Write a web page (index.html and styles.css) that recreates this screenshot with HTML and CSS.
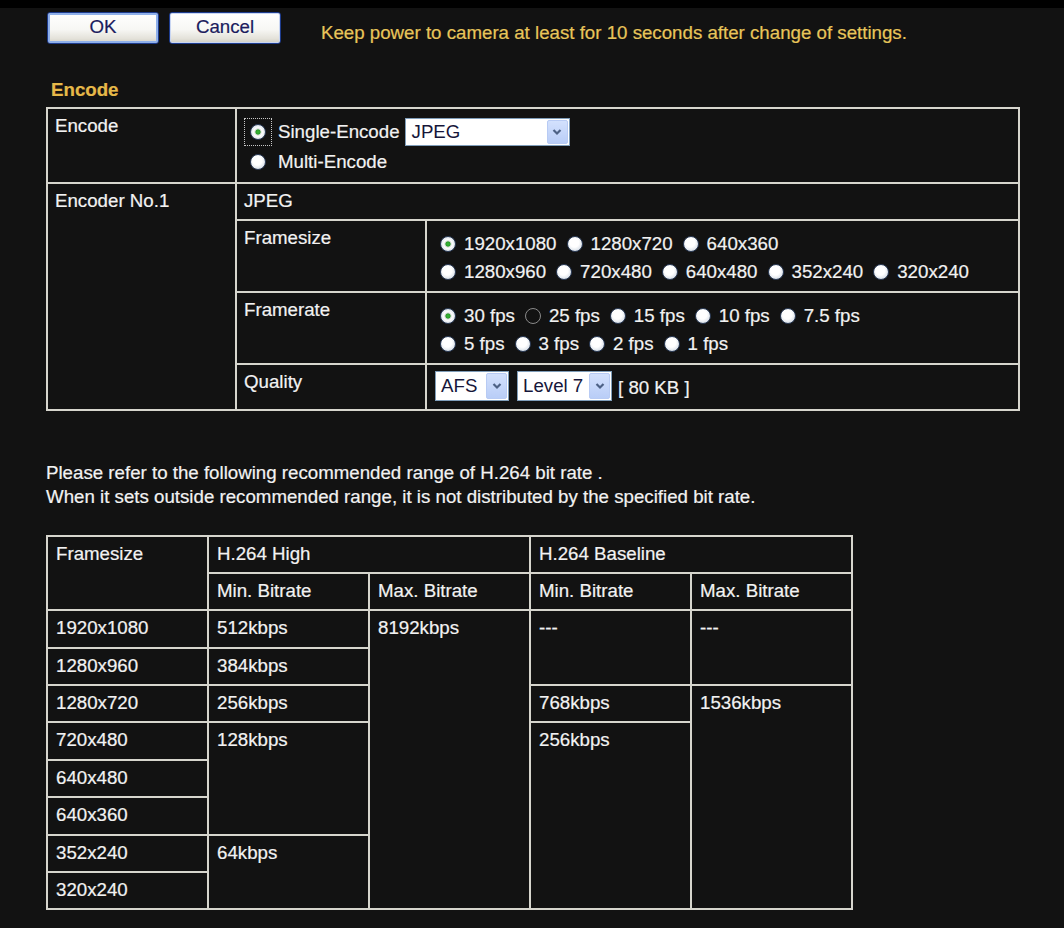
FILE: index.html
```html
<!DOCTYPE html>
<html lang="en">
<head>
<meta charset="utf-8">
<title>Encode settings</title>
<link rel="stylesheet" href="styles.css">
</head>
<body>
<div class="topbar"></div>
<div class="page">
  <div class="actions">
    <button class="btn btn-default">OK</button>
    <button class="btn">Cancel</button>
    <span class="notice">Keep power to camera at least for 10 seconds after change of settings.</span>
  </div>

  <h2 class="section-title">Encode</h2>

  <table class="grid settings">
    <colgroup><col class="c1"><col class="c2"><col class="c3"></colgroup>
    <tr class="r-encode">
      <td>Encode</td>
      <td colspan="2" class="encode-cell">
        <div class="enc-line">
          <span class="slot focus"><span class="radio checked"></span></span>
          <span class="enc-text">Single-Encode</span>
          <span class="select sel-jpeg"><span class="select-value">JPEG</span><span class="select-btn"><svg viewBox="0 0 12 12" width="12" height="12"><path d="M2.5 4 L6 7.5 L9.5 4" fill="none" stroke="#4d6185" stroke-width="2.2"/></svg></span></span>
        </div>
        <div class="enc-line">
          <span class="slot"><span class="radio"></span></span>
          <span class="enc-text">Multi-Encode</span>
        </div>
      </td>
    </tr>
    <tr class="r-jpeg">
      <td rowspan="4">Encoder No.1</td>
      <td colspan="2">JPEG</td>
    </tr>
    <tr class="r-opts">
      <td>Framesize</td>
      <td class="opt-cell">
        <div class="opt-line">
          <span class="opt"><span class="radio checked"></span>1920x1080</span>
          <span class="opt"><span class="radio"></span>1280x720</span>
          <span class="opt"><span class="radio"></span>640x360</span>
        </div>
        <div class="opt-line">
          <span class="opt"><span class="radio"></span>1280x960</span>
          <span class="opt"><span class="radio"></span>720x480</span>
          <span class="opt"><span class="radio"></span>640x480</span>
          <span class="opt"><span class="radio"></span>352x240</span>
          <span class="opt"><span class="radio"></span>320x240</span>
        </div>
      </td>
    </tr>
    <tr class="r-opts">
      <td>Framerate</td>
      <td class="opt-cell">
        <div class="opt-line">
          <span class="opt"><span class="radio checked"></span>30 fps</span>
          <span class="opt"><span class="radio empty"></span>25 fps</span>
          <span class="opt"><span class="radio"></span>15 fps</span>
          <span class="opt"><span class="radio"></span>10 fps</span>
          <span class="opt"><span class="radio"></span>7.5 fps</span>
        </div>
        <div class="opt-line">
          <span class="opt"><span class="radio"></span>5 fps</span>
          <span class="opt"><span class="radio"></span>3 fps</span>
          <span class="opt"><span class="radio"></span>2 fps</span>
          <span class="opt"><span class="radio"></span>1 fps</span>
        </div>
      </td>
    </tr>
    <tr class="r-quality">
      <td>Quality</td>
      <td class="quality-cell">
        <div class="q-line">
          <span class="select sel-afs"><span class="select-value">AFS</span><span class="select-btn"><svg viewBox="0 0 12 12" width="12" height="12"><path d="M2.5 4 L6 7.5 L9.5 4" fill="none" stroke="#4d6185" stroke-width="2.2"/></svg></span></span>
          <span class="select sel-level"><span class="select-value">Level 7</span><span class="select-btn"><svg viewBox="0 0 12 12" width="12" height="12"><path d="M2.5 4 L6 7.5 L9.5 4" fill="none" stroke="#4d6185" stroke-width="2.2"/></svg></span></span>
          <span class="q-size">[ 80 KB ]</span>
        </div>
      </td>
    </tr>
  </table>

  <p class="note">Please refer to the following recommended range of H.264 bit rate .<br>When it sets outside recommended range, it is not distributed by the specified bit rate.</p>

  <table class="grid bitrate">
    <colgroup><col><col><col><col><col></colgroup>
    <tr>
      <td rowspan="2">Framesize</td>
      <td colspan="2">H.264 High</td>
      <td colspan="2">H.264 Baseline</td>
    </tr>
    <tr>
      <td>Min. Bitrate</td>
      <td>Max. Bitrate</td>
      <td>Min. Bitrate</td>
      <td>Max. Bitrate</td>
    </tr>
    <tr>
      <td>1920x1080</td>
      <td>512kbps</td>
      <td rowspan="8">8192kbps</td>
      <td rowspan="2">---</td>
      <td rowspan="2">---</td>
    </tr>
    <tr>
      <td>1280x960</td>
      <td>384kbps</td>
    </tr>
    <tr>
      <td>1280x720</td>
      <td>256kbps</td>
      <td>768kbps</td>
      <td rowspan="6">1536kbps</td>
    </tr>
    <tr>
      <td>720x480</td>
      <td rowspan="3">128kbps</td>
      <td rowspan="5">256kbps</td>
    </tr>
    <tr>
      <td>640x480</td>
    </tr>
    <tr>
      <td>640x360</td>
    </tr>
    <tr>
      <td>352x240</td>
      <td rowspan="2">64kbps</td>
    </tr>
    <tr>
      <td>320x240</td>
    </tr>
  </table>
</div>
</body>
</html>
```

FILE: styles.css
```css
html, body {
  margin: 0;
  padding: 0;
  background: #121212;
}

body {
  font-family: "Liberation Sans", Arial, sans-serif;
  font-size: 18.7px;
  color: #f2f2f2;
  -webkit-text-stroke: 0.2px currentColor;
}

.topbar {
  height: 8px;
  background: #000;
}

.page {
  padding: 4px 0 0 46px;
}

/* action bar */
.actions {
  display: flex;
  align-items: flex-start;
}

.btn {
  box-sizing: border-box;
  width: 112px;
  height: 32px;
  margin: 0 9px 0 1px;
  padding: 0 0 3px;
  border: 1px solid #1e3c8e;
  border-radius: 3px;
  background: linear-gradient(#ffffff 0%, #f7f7f4 55%, #e4e2da 85%, #d2cfc4 100%);
  box-shadow: inset 0 0 0 1px #c9d6f2;
  font-family: "Liberation Sans", Arial, sans-serif;
  font-size: 18.7px;
  color: #1c1c5e;
  -webkit-text-stroke: 0.2px currentColor;
}

.btn-default {
  box-shadow: inset 0 0 0 2px #8fb0ea;
}

.notice {
  margin: 10px 0 0 31px;
  color: #e8c55a;
}

.section-title {
  margin: 35px 0 6px 5px;
  font-size: 18.7px;
  font-weight: bold;
  color: #e6b949;
  line-height: 21.5px;
}

/* tables */
.grid {
  border-collapse: collapse;
  table-layout: fixed;
}

.grid td {
  border: 2px solid #d6d5cd;
  padding: 6px 7px;
  vertical-align: top;
  line-height: 21.5px;
}

.settings {
  width: 972px;
}

.settings .c1 { width: 189px; }
.settings .c2 { width: 190px; }
.settings .c3 { width: 593px; }

.r-encode { height: 75px; }
.r-jpeg { height: 37px; }
.r-opts { height: 72px; }
.r-quality { height: 46px; }

.grid td.encode-cell {
  padding-top: 8px;
  padding-bottom: 0;
}

.enc-line {
  display: flex;
  align-items: center;
  height: 30px;
}

.slot {
  box-sizing: border-box;
  width: 28px;
  height: 28px;
  display: flex;
  align-items: center;
  justify-content: center;
  border: 1px dotted transparent;
}

.slot.focus {
  border-color: #c8c8c8;
}

.enc-text {
  margin-left: 6px;
}

/* radios */
.radio {
  box-sizing: border-box;
  display: inline-block;
  flex: none;
  width: 16px;
  height: 16px;
  border-radius: 50%;
  border: 1px solid #24344f;
  background: radial-gradient(circle at 45% 40%, #ffffff 0%, #ffffff 40%, #e4e9ef 65%, #b3bfcf 100%);
}

.radio.checked {
  background: radial-gradient(circle at 50% 50%, #39b839 0%, #2b9d2b 22%, #cfd8d0 30%, #ffffff 42%, #e4e9ef 65%, #b3bfcf 100%);
}

.radio.empty {
  border: 1px solid #8a8a8a;
  background: transparent;
}

.grid td.opt-cell {
  padding-top: 9px;
  padding-bottom: 0;
  padding-left: 13px;
}

.opt-line {
  display: flex;
  align-items: center;
  height: 28.3px;
}

.opt {
  display: inline-flex;
  align-items: center;
  margin-right: 10px;
}

.opt .radio {
  margin-right: 8px;
}

/* select boxes */
.select {
  box-sizing: border-box;
  display: inline-flex;
  flex: none;
  align-items: stretch;
  height: 28px;
  border: 1px solid #7f9db9;
  background: #fff;
  color: #16163a;
  -webkit-text-stroke: 0;
}

.select-value {
  flex: 1;
  padding-left: 6px;
  line-height: 26px;
}

.select-btn {
  box-sizing: border-box;
  width: 21px;
  margin: 1px;
  display: flex;
  align-items: center;
  justify-content: center;
  border: 1px solid #b8cbf4;
  border-radius: 2px;
  background: linear-gradient(#d3e1fd, #b9cdf7);
}

.sel-jpeg {
  width: 165px;
  margin-left: 5px;
}

.grid td.quality-cell {
  padding-top: 6px;
  padding-bottom: 0;
  padding-left: 8px;
}

.q-line {
  display: flex;
  align-items: center;
  height: 30px;
}

.sel-afs {
  width: 74px;
  height: 30px;
  margin-right: 8px;
}

.sel-level {
  width: 95px;
  height: 30px;
  margin-right: 6px;
}

.sel-afs .select-value,
.sel-level .select-value {
  line-height: 28px;
  padding-left: 5px;
}

.q-size {
  padding-top: 4px;
}

.note {
  margin: 50px 0 26px;
  line-height: 24px;
}

.bitrate {
  width: 805px;
}

.bitrate col { width: 161px; }

.bitrate tr { height: 37.4px; }

.bitrate td {
  padding: 6px 8px;
}
```
